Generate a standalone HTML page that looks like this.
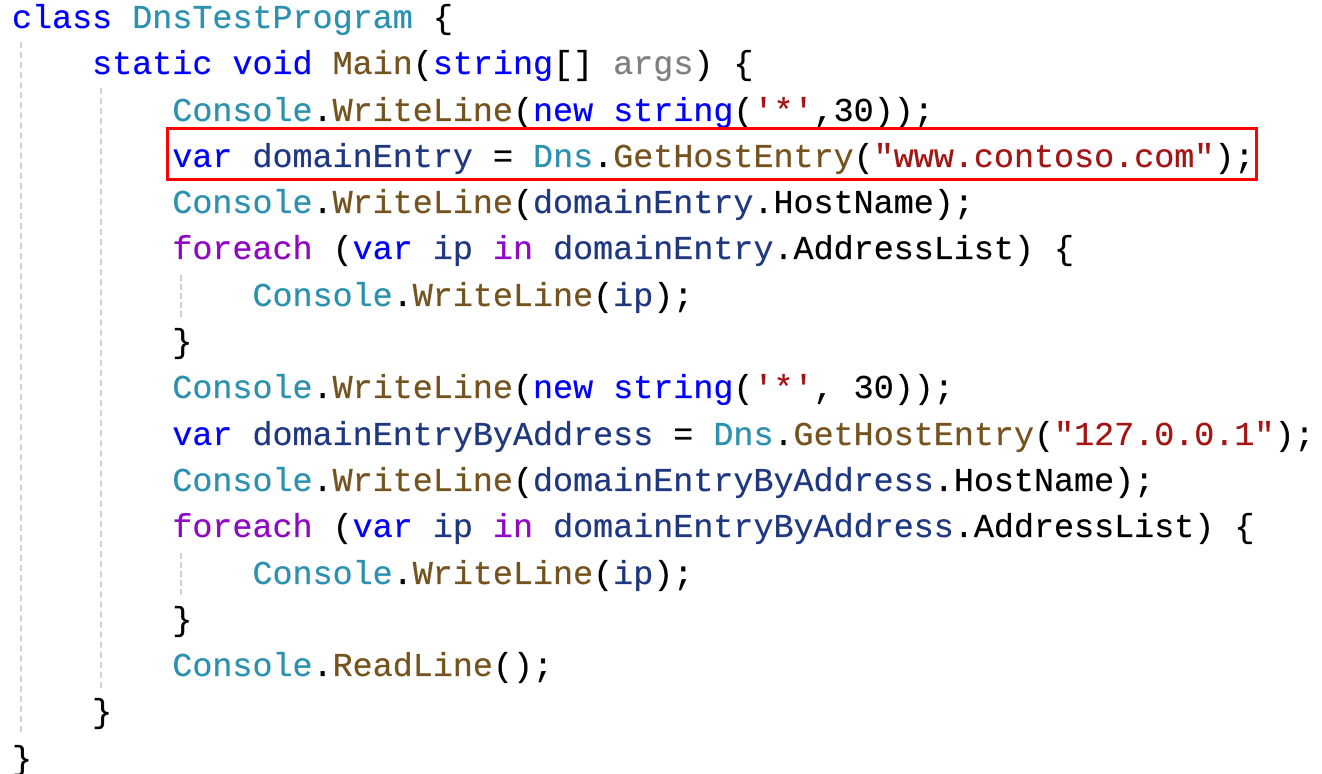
<!DOCTYPE html>
<html><head><meta charset="utf-8"><style>
html,body{margin:0;padding:0;background:#fff;width:1322px;height:774px;overflow:hidden;position:relative}
.c{position:absolute;left:12px;top:-3px;font-family:"Liberation Mono",monospace;font-size:33.4px;line-height:46.3px;white-space:pre;color:#000;-webkit-text-stroke:0.3px currentColor}
.k{color:#0000ff}.t{color:#2b91af}.m{color:#74531f}.v{color:#1f377f}.s{color:#a31515}.p{color:#8f08c4}.g{color:#808080}
.gd{position:absolute;width:0;border-left:2px dashed #d0d0d0}
.box{position:absolute;left:166px;top:127px;width:1086px;height:48px;border:3px solid #f00}
</style></head><body>
<div class="gd" style="left:20px;top:42px;height:690px"></div>
<div class="gd" style="left:100px;top:88px;height:600px"></div>
<div class="gd" style="left:180px;top:275px;height:42px"></div>
<div class="gd" style="left:180px;top:553px;height:42px"></div>
<div class="c"><span class="k">class</span> <span class="t">DnsTestProgram</span> {
    <span class="k">static</span> <span class="k">void</span> <span class="m">Main</span>(<span class="k">string</span>[] <span class="g">args</span>) {
        <span class="t">Console</span>.<span class="m">WriteLine</span>(<span class="k">new</span> <span class="k">string</span>(<span class="s">'*'</span>,30));
        <span class="k">var</span> <span class="v">domainEntry</span> = <span class="t">Dns</span>.<span class="m">GetHostEntry</span>(<span class="s">"www.contoso.com"</span>);
        <span class="t">Console</span>.<span class="m">WriteLine</span>(<span class="v">domainEntry</span>.HostName);
        <span class="p">foreach</span> (<span class="k">var</span> <span class="v">ip</span> <span class="p">in</span> <span class="v">domainEntry</span>.AddressList) {
            <span class="t">Console</span>.<span class="m">WriteLine</span>(<span class="v">ip</span>);
        }
        <span class="t">Console</span>.<span class="m">WriteLine</span>(<span class="k">new</span> <span class="k">string</span>(<span class="s">'*'</span>, 30));
        <span class="k">var</span> <span class="v">domainEntryByAddress</span> = <span class="t">Dns</span>.<span class="m">GetHostEntry</span>(<span class="s">"127.0.0.1"</span>);
        <span class="t">Console</span>.<span class="m">WriteLine</span>(<span class="v">domainEntryByAddress</span>.HostName);
        <span class="p">foreach</span> (<span class="k">var</span> <span class="v">ip</span> <span class="p">in</span> <span class="v">domainEntryByAddress</span>.AddressList) {
            <span class="t">Console</span>.<span class="m">WriteLine</span>(<span class="v">ip</span>);
        }
        <span class="t">Console</span>.<span class="m">ReadLine</span>();
    }
}</div>
<div class="box"></div>
</body></html>
